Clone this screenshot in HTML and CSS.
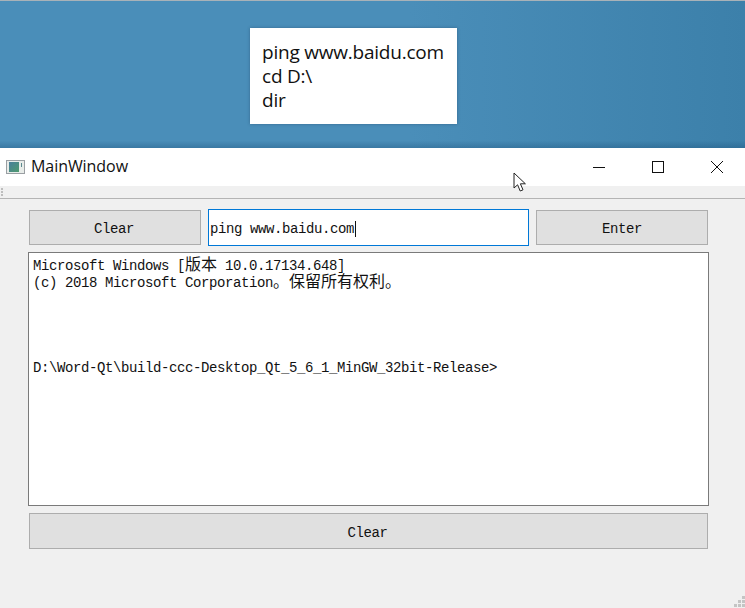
FILE: index.html
```html
<!DOCTYPE html>
<html lang="zh">
<head>
<meta charset="utf-8">
<title>MainWindow</title>
<link rel="stylesheet" href="styles.css">
</head>
<body>
<div class="desktop">
  <div class="note">ping www.baidu.com<br>cd D:\<br>dir</div>
</div>
<div class="window">
  <header class="titlebar">
    <svg class="appicon" width="20" height="16" viewBox="0 0 20 16">
      <rect x="0.5" y="1.5" width="18" height="13" fill="#e8ece9" stroke="#9a9fa3"/>
      <defs><linearGradient id="g" x1="0" y1="0" x2="1" y2="1"><stop offset="0" stop-color="#4a7f9c"/><stop offset="1" stop-color="#4f9a6e"/></linearGradient></defs>
      <rect x="3" y="3" width="10" height="10" fill="url(#g)"/>
      <rect x="15" y="4" width="1" height="4" fill="#5b8a8f"/>
    </svg>
    <span class="title">MainWindow</span>
    <div class="controls">
      <svg class="ctl" width="14" height="14" viewBox="0 0 14 14"><path d="M1 7.5H13" stroke="#111" fill="none"/></svg>
      <svg class="ctl" width="14" height="14" viewBox="0 0 14 14"><rect x="1.5" y="1.5" width="11" height="11" stroke="#111" fill="none"/></svg>
      <svg class="ctl" width="14" height="14" viewBox="0 0 14 14"><path d="M1 1L13 13M13 1L1 13" stroke="#111" fill="none"/></svg>
    </div>
  </header>
  <div class="toolbar">
    <svg class="handle" width="3" height="8" viewBox="0 0 3 8"><path d="M0 0h2v2H0zM0 3h2v2H0zM0 6h2v2H0z" fill="#bdbdbd"/></svg>
  </div>
  <main class="content">
    <div class="row">
      <button class="btn side">Clear</button>
      <div class="input"><span>ping www.baidu.com</span><i class="caret"></i></div>
      <button class="btn side enter">Enter</button>
    </div>
    <pre class="console">Microsoft Windows [<span class="cjk">版本</span> 10.0.17134.648]
(c) 2018 Microsoft Corporation<span class="cjk">。保留所有权利。</span>




D:\Word-Qt\build-ccc-Desktop_Qt_5_6_1_MinGW_32bit-Release&gt;</pre>
    <button class="btn wide">Clear</button>
  </main>
  <svg class="grip" width="12" height="12" viewBox="0 0 12 12"><path d="M9 0h3v3H9zM9 4h3v3H9zM5 4h3v3H5zM9 8h3v3H9zM5 8h3v3H5zM1 8h3v3H1z" fill="#c4c4c4"/></svg>
</div>
<svg class="cursor" width="14" height="21" viewBox="0 0 14 21"><path d="M1 1V16L4.6 12.8L7.2 19L10 17.8L7.4 11.8H12.4Z" fill="#fff" stroke="#222" stroke-width="1"/></svg>
</body>
</html>
```

FILE: styles.css
```css
* { box-sizing: border-box; }
html, body { margin: 0; height: 100%; }
body { width: 745px; height: 608px; overflow: hidden; position: relative; background: #f0f0f0; font-family: "Liberation Mono", monospace; }

.desktop {
  height: 148px;
  padding: 27px 0 0 250px;
  border-top: 1px solid #a9b2b8;
  background: linear-gradient(180deg, rgba(20,70,110,0) 95%, rgba(20,70,110,.3) 100%), linear-gradient(90deg, #4a8eb9 0%, #4a8eb9 55%, #3c80aa 100%);
}
.note {
  width: 207px;
  height: 96px;
  padding: 12px 12px 0;
  background: #fff;
  box-shadow: 0 0 3px rgba(30,60,90,.45);
  font: 19px/24px "Open Sans", "Noto Sans", sans-serif;
  letter-spacing: -.22px;
  color: #111;
}

.window { position: relative; height: 460px; }
.titlebar { display: flex; align-items: center; height: 38px; background: #fff; padding-left: 6px; }
.appicon { flex: none; }
.title { margin-left: 5px; margin-top: -2px; font: 16px "Open Sans", "Noto Sans", sans-serif; color: #111; letter-spacing: -.06px; }
.controls { margin-left: auto; display: flex; gap: 45px; padding-right: 21px; margin-top: -1px; }
.ctl { display: block; }

.toolbar { height: 13px; background: #f0f0f0; border-bottom: 1px solid #b4b4b4; padding: 2px 0 0 1px; }
.handle { display: block; }

.content { padding: 10px 36px 0 28px; display: flex; flex-direction: column; width: 745px; }
.row { display: flex; align-items: center; gap: 7px; padding: 0 1px; }
.btn {
  display: block;
  height: 35px;
  margin: 0;
  padding: 2px 2px 0 0;
  background: #e0e0e0;
  border: 1px solid #adadad;
  border-radius: 0;
  font: 14px "Liberation Mono", monospace;
  letter-spacing: -.4px;
  color: #111;
}
.side { width: 172px; flex: none; }
.enter { padding-right: 0; }
.input {
  flex: 1;
  height: 37px;
  padding: 2px 0 0 1px;
  display: flex;
  align-items: center;
  background: #fff;
  border: 1px solid #0078d7;
  font-size: 14px;
  letter-spacing: -.4px;
  color: #111;
}
.caret { display: block; width: 1px; height: 16px; background: #111; margin-left: 1px; }
.console {
  margin: 6px 0 0;
  height: 254px;
  width: 681px;
  padding: 5px 0 0 4px;
  background: #fff;
  border: 1px solid #7a7a7a;
  font: 14px/17px "Liberation Mono", monospace;
  letter-spacing: -.4px;
  color: #111;
}
.cjk { font: 16px/1 "Noto Sans CJK SC", sans-serif; letter-spacing: 0; line-height: 0; }
.wide { width: 679px; height: 36px; margin: 7px 0 0 1px; padding-top: 3px; }
.grip { position: absolute; right: 0; bottom: 0; }
.cursor { position: absolute; left: 513px; top: 172px; }
```
